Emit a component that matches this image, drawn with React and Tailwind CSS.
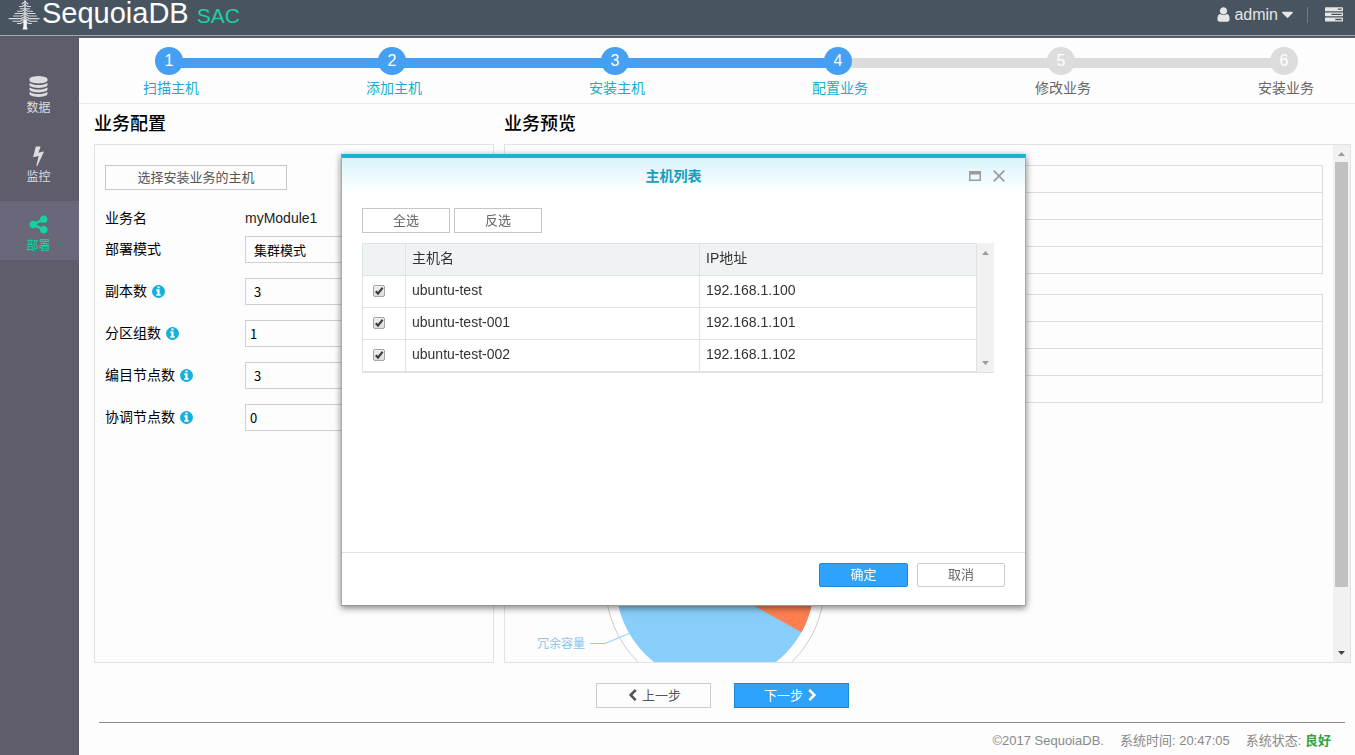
import { useState } from "react";

const ICONS = {
  user: "M1536 1399q0 109-62.5 187t-150.5 78h-854q-88 0-150.5-78t-62.5-187q0-85 8.5-160.5t31.5-152 58.5-131 94-89 134.5-34.5q131 128 313 128t313-128q76 0 134.5 34.5t94 89 58.5 131 31.5 152 8.5 160.5zm-256-887q0 159-112.5 271.5t-271.5 112.5-271.5-112.5-112.5-271.5 112.5-271.5 271.5-112.5 271.5 112.5 112.5 271.5z",
  caret: "M1408 704q0 26-19 45l-448 448q-19 19-45 19t-45-19l-448-448q-19-19-19-45t19-45 45-19h896q26 0 45 19t19 45z",
  tasks: "M1024 1408h640v-128h-640v128zm-384-512h1024v-128h-1024v128zm640-512h384v-128h-384v128zm512 832v256q0 26-19 45t-45 19h-1664q-26 0-45-19t-19-45v-256q0-26 19-45t45-19h1664q26 0 45 19t19 45zm0-512v256q0 26-19 45t-45 19h-1664q-26 0-45-19t-19-45v-256q0-26 19-45t45-19h1664q26 0 45 19t19 45zm0-512v256q0 26-19 45t-45 19h-1664q-26 0-45-19t-19-45v-256q0-26 19-45t45-19h1664q26 0 45 19t19 45z",
  database: "M896 768q237 0 443-43t325-127v170q0 69-103 128t-280 93.5-385 34.5-385-34.5-280-93.5-103-128v-170q119 84 325 127t443 43zm0 768q237 0 443-43t325-127v170q0 69-103 128t-280 93.5-385 34.5-385-34.5-280-93.5-103-128v-170q119 84 325 127t443 43zm0-384q237 0 443-43t325-127v170q0 69-103 128t-280 93.5-385 34.5-385-34.5-280-93.5-103-128v-170q119 84 325 127t443 43zm0-1152q208 0 385 34.5t280 93.5 103 128v128q0 69-103 128t-280 93.5-385 34.5-385-34.5-280-93.5-103-128v-128q0-69 103-128t280-93.5 385-34.5z",
  bolt: "M1333 566q18 20 7 44l-540 1157q-13 25-42 25-4 0-14-2-17-5-25.5-19t-4.5-30l197-808-406 101q-4 1-12 1-18 0-31-11-18-15-13-39l201-825q4-14 16-23t28-9h328q19 0 32 12.5t13 29.5q0 8-5 18l-171 463 396-98q8-2 12-2 19 0 34 15z",
  share: "M1344 1024q133 0 226.5 93.5t93.5 226.5-93.5 226.5-226.5 93.5-226.5-93.5-93.5-226.5q0-12 2-34l-360-180q-92 86-218 86-133 0-226.5-93.5t-93.5-226.5 93.5-226.5 226.5-93.5q126 0 218 86l360-180q-2-22-2-34 0-133 93.5-226.5t226.5-93.5 226.5 93.5 93.5 226.5-93.5 226.5-226.5 93.5q-126 0-218-86l-360 180q2 22 2 34t-2 34l360 180q92-86 218-86z",
  info: "M1152 1376v-160q0-14-9-23t-23-9h-96v-512q0-14-9-23t-23-9h-320q-14 0-23 9t-9 23v160q0 14 9 23t23 9h96v320h-96q-14 0-23 9t-9 23v160q0 14 9 23t23 9h448q14 0 23-9t9-23zm-128-896v-160q0-14-9-23t-23-9h-192q-14 0-23 9t-9 23v160q0 14 9 23t23 9h192q14 0 23-9t9-23zm640 416q0 209-103 385.5t-279.5 279.5-385.5 103-385.5-103-279.5-279.5-103-385.5 103-385.5 279.5-279.5 385.5-103 385.5 103 279.5 279.5 103 385.5z",
  left: "M1427 301l-531 531 531 531q19 19 19 45t-19 45l-166 166q-19 19-45 19t-45-19l-742-742q-19-19-19-45t19-45l742-742q19-19 45-19t45 19l166 166q19 19 19 45t-19 45z",
  right: "M1363 877l-742 742q-19 19-45 19t-45-19l-166-166q-19-19-19-45t19-45l531-531-531-531q-19-19-19-45t19-45l166-166q19-19 45-19t45 19l742 742q19 19 19 45t-19 45z",
};

function Icon({ name, className }) {
  return (
    <svg viewBox="0 0 1792 1792" fill="currentColor" aria-hidden="true" className={`shrink-0 ${className}`}>
      <path d={ICONS[name]} />
    </svg>
  );
}

function TreeLogo() {
  return (
    <svg viewBox="0 0 32 30" aria-hidden="true" className="h-[30px] w-8 shrink-0" fill="none" stroke="#d5dadd" strokeWidth="1.1" strokeLinecap="round">
      <path d="M17 1v19" strokeWidth="1.4" />
      <path d="M14 4l3-2.500L20 4M11.500 6.500h3l2.500-2 2.500 2h3M12.500 8.800h9M9.500 11.300h4.500l3-2 3 2h4.500M7 13.500h8l2-1.500 2 1.500h8M5.500 16h8l3.500-2 3.500 2h8M1 18.600h12l4-2.200 4 2.200h10M5 21.200h7l5-2.700 5 2.700h7M9.500 23.500h3l4-2.600 4 2.600h3" />
      <path d="M15.400 20h3.400v6.500l.8 3h-5l.8-3z" fill="#f4f6f7" stroke="none" />
    </svg>
  );
}

function Header() {
  return (
    <header className="flex h-[38px] shrink-0 flex-col bg-[#48545f] text-[#e3e5e7]">
      <div className="flex h-[35px] items-start justify-between pr-3 pl-2">
        <a href="#home" className="flex items-baseline">
          <span className="self-start"><TreeLogo /></span>
          <span className="pl-[2px] text-[29px] leading-[27px] text-white">SequoiaDB</span>
          <span className="pl-2 text-[21px] leading-[27px] text-[#1fd0a0]">SAC</span>
        </a>
        <div className="flex h-[29px] items-center">
          <button type="button" className="flex items-center text-[16px]">
            <Icon name="user" className="size-[17px]" />
            <span className="pl-[2px]">admin</span>
            <Icon name="caret" className="size-[19px]" />
          </button>
          <span className="mr-[17px] ml-[10px] h-4 w-px bg-[#707a83]" />
          <button type="button" aria-label="任务" className="flex">
            <Icon name="tasks" className="size-[18px]" />
          </button>
        </div>
      </div>
      <div className="h-px bg-[#a3a9ae]" />
      <div className="h-[2px] bg-[#555d66]" />
    </header>
  );
}

const NAV = [
  { icon: "database", label: "数据" },
  { icon: "bolt", label: "监控" },
  { icon: "share", label: "部署", active: true },
];

function Sidebar() {
  return (
    <nav className="flex w-[79px] shrink-0 flex-col gap-[10px] bg-[#5f5c6c] pt-[25px]">
      {NAV.map((item) => (
        <a
          key={item.label}
          href="#nav"
          className={`flex h-[59px] flex-col items-center gap-[3px] pt-[13px] pr-[2px] text-[12px] leading-[16px] ${
            item.active ? "bg-[#6a677a] text-[#15d3a1]" : "text-[#dddde0]"
          }`}
        >
          <Icon name={item.icon} className="size-[21px]" />
          {item.label}
        </a>
      ))}
    </nav>
  );
}

const STEPS = ["扫描主机", "添加主机", "安装主机", "配置业务", "修改业务", "安装业务"];
const CURRENT = 3;

function Steps() {
  return (
    <ol className="flex h-[66px] shrink-0 border-b border-[#e9e9e9] pt-[9px] pr-[41px] pl-16">
      {STEPS.map((label, i) => (
        <li key={label} className={`relative ${i < STEPS.length - 1 ? "flex-1" : "shrink-0"}`}>
          {i < STEPS.length - 1 && (
            <span className={`absolute top-[11px] left-[26px] h-[10px] w-full ${i < CURRENT ? "bg-[#459ff3]" : "bg-[#dcdcdc]"}`} />
          )}
          <span
            className={`relative z-10 ml-3 flex size-7 items-center justify-center rounded-full text-[16px] text-white ${
              i <= CURRENT ? "bg-[#459ff3]" : "bg-[#dcdcdc]"
            }`}
          >
            {i + 1}
          </span>
          <span className={`block pt-[3px] text-[14px] leading-[20px] ${i <= CURRENT ? "text-[#12b0cc]" : "text-[#666]"}`}>{label}</span>
        </li>
      ))}
    </ol>
  );
}

const FIELDS = [
  { id: "mode", label: "部署模式", options: ["集群模式", "单机模式"] },
  { id: "replica", label: "副本数", info: true, options: ["3", "5", "7"] },
  { id: "group", label: "分区组数", info: true, value: "1" },
  { id: "catalog", label: "编目节点数", info: true, options: ["3", "5", "7"] },
  { id: "coord", label: "协调节点数", info: true, value: "0" },
];

function ConfigPanel() {
  return (
    <section className="flex w-[400px] shrink-0 flex-col">
      <h2 className="flex h-10 items-center text-[18px] font-medium text-black">业务配置</h2>
      <div className="min-h-0 flex-1 overflow-hidden border border-[#e2e2e2] px-[10px] pt-5 text-[14px] text-black">
        <button type="button" className="block h-[25px] w-[182px] border border-[#c3c6cb] text-[13px] leading-[23px] text-[#555]">
          选择安装业务的主机
        </button>
        <div className="mt-[15px] flex h-[26px] items-center">
          <span className="w-[140px]">业务名</span>
          <span className="text-[#222]">myModule1</span>
        </div>
        <div className="mt-[5px] flex flex-col gap-[15px]">
          {FIELDS.map((f) => (
            <div key={f.id} className="flex h-[27px] items-center">
              <label htmlFor={f.id} className="flex w-[140px] items-center gap-1">
                {f.label}
                {f.info && <Icon name="info" className="size-[15px] text-[#16b0dc]" />}
              </label>
              {f.options ? (
                <select id={f.id} className="h-[27px] min-w-0 flex-1 appearance-none border border-[#ccd0d4] bg-transparent px-2 font-['Noto_Sans_CJK_SC',sans-serif] text-[13px] leading-[25px]">
                  {f.options.map((o) => (
                    <option key={o}>{o}</option>
                  ))}
                </select>
              ) : (
                <input id={f.id} defaultValue={f.value} className="h-[27px] min-w-0 flex-1 border border-[#ccd0d4] bg-transparent px-1 font-['Noto_Sans_CJK_SC',sans-serif] text-[13px]" />
              )}
            </div>
          ))}
        </div>
      </div>
    </section>
  );
}

function PreviewTable() {
  return (
    <table className="w-full border-collapse">
      <tbody>
        {[0, 1, 2, 3].map((r) => (
          <tr key={r}>
            <td className="h-[27px] border border-[#dcdcdc] p-0" />
          </tr>
        ))}
      </tbody>
    </table>
  );
}

function CapacityChart() {
  return (
    <svg viewBox="0 0 404 290" className="h-[290px] w-[404px] shrink-0">
      <circle cx="200" cy="161" r="109.500" fill="#fff" stroke="#ccc" />
      <circle cx="200" cy="161" r="99" fill="#87cefa" />
      <path d="M200 161L200 62A99 99 0 0 1 286.500 209.200Z" fill="#ff7f50" />
      <path d="M75 220.500h15l24-10" fill="none" stroke="#87cefa" />
      <text x="22" y="225" fontSize="12" fill="#87c5ec">冗余容量</text>
    </svg>
  );
}

function Arrow({ up, className }) {
  return (
    <svg viewBox="0 0 7 4" fill="currentColor" aria-hidden="true" className={`h-1 w-[7px] ${className}`}>
      <path d={up ? "M0 4L3.500 0 7 4z" : "M0 0L3.500 4 7 0z"} />
    </svg>
  );
}

function PreviewPanel() {
  return (
    <section className="flex min-w-0 flex-1 flex-col">
      <h2 className="flex h-10 items-center text-[18px] font-medium text-black">业务预览</h2>
      <div className="flex min-h-0 flex-1 overflow-hidden border border-[#e2e2e2]">
        <div className="flex min-w-0 flex-1 flex-col gap-5 overflow-hidden pt-5 pr-[10px] pl-[10px]">
          <PreviewTable />
          <PreviewTable />
          <CapacityChart />
        </div>
        <div className="flex w-[17px] shrink-0 flex-col items-center bg-[#f1f1f1] py-[7px]">
          <Arrow up className="mb-[6px] text-[#9a9a9a]" />
          <div className="w-[13px] flex-1 bg-[#c1c1c1]" />
          <Arrow className="mt-16 text-[#444]" />
        </div>
      </div>
    </section>
  );
}

const HOSTS = [
  { name: "ubuntu-test", ip: "192.168.1.100" },
  { name: "ubuntu-test-001", ip: "192.168.1.101" },
  { name: "ubuntu-test-002", ip: "192.168.1.102" },
];

function CheckBox({ label, checked, onChange }) {
  return (
    <span className="grid size-3 place-items-center">
      <input
        type="checkbox"
        aria-label={label}
        checked={checked}
        onChange={onChange}
        className="col-start-1 row-start-1 size-3 appearance-none rounded-[2px] border border-[#a5a5a5] bg-linear-to-b from-[#f0f0f0] to-[#dedede]"
      />
      {checked && (
        <svg viewBox="0 0 12 12" aria-hidden="true" className="pointer-events-none col-start-1 row-start-1 size-3">
          <path d="M2.800 6.200L5 8.600 9.600 2.800" fill="none" stroke="#3f3f3f" strokeWidth="2.200" />
        </svg>
      )}
    </span>
  );
}

function HostDialog() {
  const [picked, setPicked] = useState([true, true, true]);
  const cell = "border border-[#dfe2e4] px-[6px] text-left align-top leading-[29px] font-normal";
  const plain = "h-[25px] w-[88px] border border-[#c3c6cb] text-[13px] leading-[23px] text-[#666]";

  return (
    <div className="pointer-events-none fixed inset-0 z-20 flex items-start justify-center pt-[154px] pl-3">
      <div role="dialog" aria-label="主机列表" className="pointer-events-auto flex h-[452px] w-[685px] flex-col border-x border-t-4 border-b border-x-[#a9a9a9] border-t-[#1bb1d2] border-b-[#999] bg-white shadow-[0_2px_7px_rgba(0,0,0,0.5)]">
        <div className="relative h-[50px] shrink-0 bg-linear-to-b from-[#d8f4fc] to-white to-70% pr-5">
          <h3 className="text-center text-[14px] leading-[36px] font-bold text-[#129fc2]">主机列表</h3>
          <div className="absolute top-3 right-5 flex items-center gap-3 text-[#9b9b9b]">
            <button type="button" aria-label="最大化">
              <svg viewBox="0 0 12 12" className="block size-3"><path d="M0 1h12v10H0zM1.500 4.500v5h9v-5z" fill="currentColor" fillRule="evenodd" /></svg>
            </button>
            <button type="button" aria-label="关闭">
              <svg viewBox="0 0 12 12" className="block size-3"><path d="M.7.7l10.600 10.600M11.300.7L.7 11.300" fill="none" stroke="currentColor" strokeWidth="1.700" /></svg>
            </button>
          </div>
        </div>
        <div className="min-h-0 flex-1 pr-[31px] pl-5">
          <div className="flex gap-1">
            <button type="button" className={plain} onClick={() => setPicked(picked.map(() => true))}>全选</button>
            <button type="button" className={plain} onClick={() => setPicked(picked.map((p) => !p))}>反选</button>
          </div>
          <div className="mt-[10px] flex border-b border-[#dfe2e4] text-[14px] text-[#333]">
            <table className="min-w-0 flex-1 table-fixed border-collapse">
              <colgroup>
                <col className="w-[43px]" />
                <col className="w-[294px]" />
                <col />
              </colgroup>
              <thead>
                <tr className="h-8 bg-[#f0f3f4]">
                  <th className={cell} />
                  <th className={cell}>主机名</th>
                  <th className={cell}>IP地址</th>
                </tr>
              </thead>
              <tbody>
                {HOSTS.map((h, i) => (
                  <tr key={h.name} className="h-8">
                    <td className="border border-[#dfe2e4] px-[10px] pb-[2px] align-middle">
                      <CheckBox label={h.name} checked={picked[i]} onChange={() => setPicked(picked.map((p, j) => (j === i ? !p : p)))} />
                    </td>
                    <td className={cell}>{h.name}</td>
                    <td className={cell}>{h.ip}</td>
                  </tr>
                ))}
              </tbody>
            </table>
            <div className="flex w-[17px] shrink-0 flex-col items-center justify-between bg-[#f1f1f1] pt-2 pb-[7px] text-[#9a9a9a]">
              <Arrow up className="" />
              <Arrow className="" />
            </div>
          </div>
        </div>
        <div className="flex h-[53px] shrink-0 justify-end gap-[9px] border-t border-[#e2e2e2] pt-[10px] pr-5">
          <button type="button" className="h-6 w-[89px] rounded-[2px] border border-[#1f86d6] bg-[#2ea3fc] text-[13px] leading-[22px] text-white">确定</button>
          <button type="button" className="h-6 w-[88px] rounded-[2px] border border-[#c9ccd0] text-[13px] leading-[22px] text-[#666]">取消</button>
        </div>
      </div>
    </div>
  );
}

export default function App() {
  return (
    <div className="flex h-screen flex-col bg-[#fdfdfd] font-['Liberation_Sans','Noto_Sans_CJK_SC',sans-serif]">
      <Header />
      <div className="flex min-h-0 flex-1">
        <Sidebar />
        <main className="flex min-w-0 flex-1 flex-col">
          <Steps />
          <div className="flex min-h-0 flex-1 gap-[10px] pr-1 pl-[15px]">
            <ConfigPanel />
            <PreviewPanel />
          </div>
          <div className="flex shrink-0 justify-center gap-[23px] pt-5 pr-1 pb-[14px] pl-[15px] text-[13px]">
            <button type="button" className="flex h-[25px] w-[115px] items-center justify-center gap-[3px] border border-[#c9ccd0] text-[#555]">
              <Icon name="left" className="size-[13px]" />
              上一步
            </button>
            <button type="button" className="flex h-[25px] w-[115px] items-center justify-center gap-[3px] border border-[#1f86d6] bg-[#2ea3fc] text-white">
              下一步
              <Icon name="right" className="size-[13px]" />
            </button>
          </div>
          <footer className="mr-[10px] ml-5 flex h-[33px] shrink-0 justify-end gap-4 border-t border-[#8d888d] pr-[14px] text-[13px] leading-[36px] text-[#888]">
            <span>©2017 SequoiaDB.</span>
            <span>系统时间: 20:47:05</span>
            <span>系统状态: <b className="text-[#3c9f47]">良好</b></span>
          </footer>
        </main>
      </div>
      <HostDialog />
    </div>
  );
}
